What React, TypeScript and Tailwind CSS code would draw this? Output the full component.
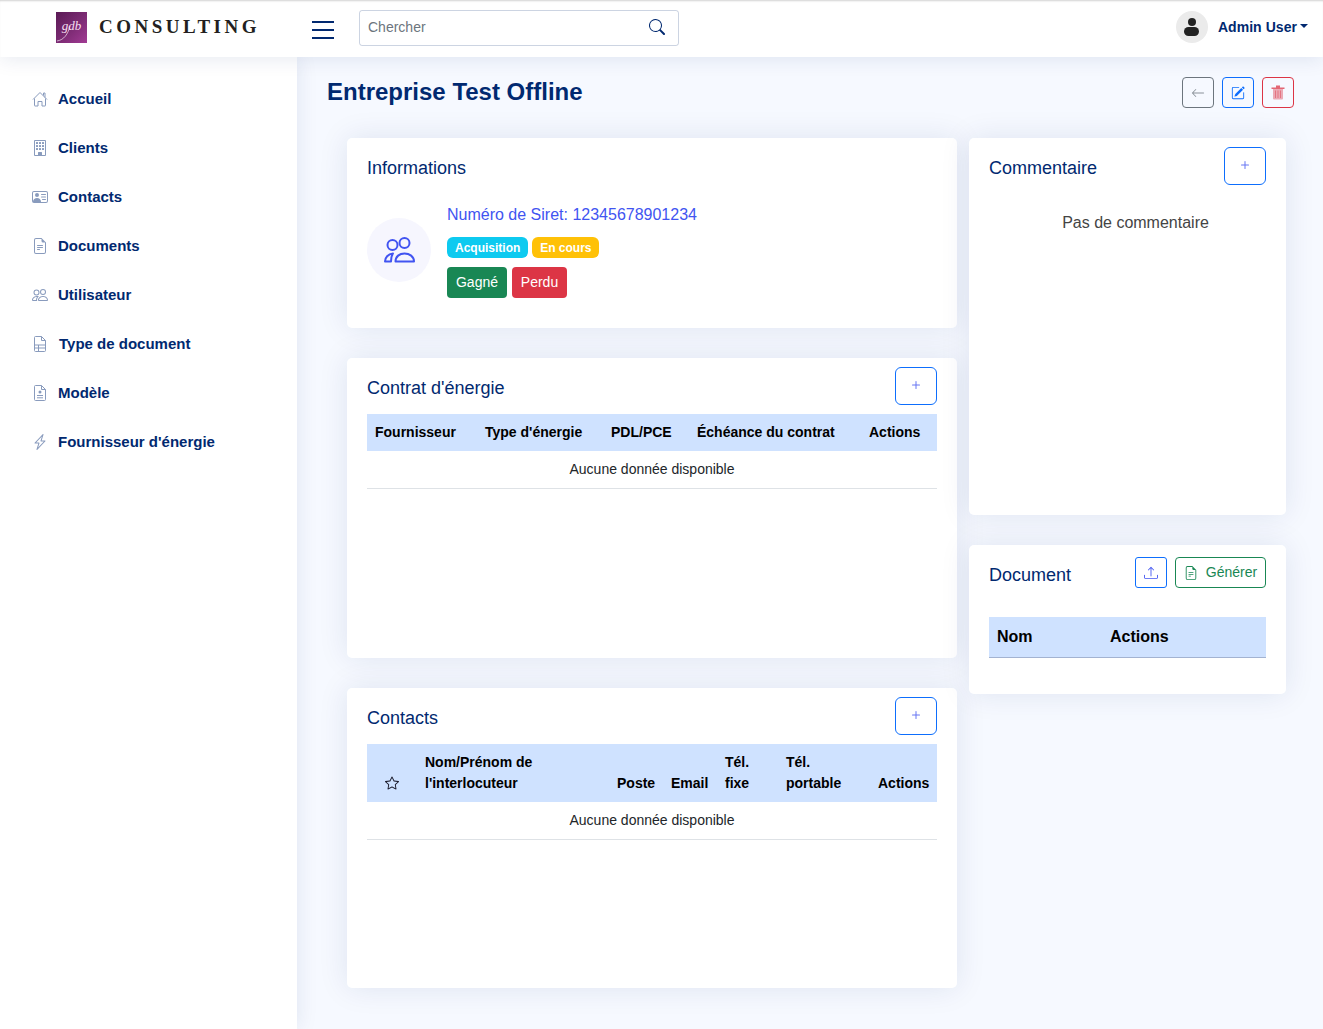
import React from "react";
import {
  BsBuilding, BsPersonVcard, BsFileEarmarkText, BsPeople,
  BsLightningCharge, BsSearch, BsArrowLeft, BsPencilSquare,
  BsUpload, BsStar, BsPlus,
} from "react-icons/bs";

function HomeIcon({ size, className }: { size: number; className?: string }) {
  return (
    <svg width={size} height={size} viewBox="0 0 16 16" fill="none" stroke="currentColor" strokeWidth="1" className={className}>
      <path d="M1 8.500 8 1.500l7 7" strokeLinejoin="round" />
      <path d="M11.500 4.500V2h1.500v4.500" />
      <path d="M2.500 7.500v7a.5.5 0 0 0 .5.5h3v-4.500h4V15h3a.5.5 0 0 0 .5-.5v-7" strokeLinejoin="round" />
    </svg>
  );
}

function TableDocIcon({ size, className }: { size: number; className?: string }) {
  return (
    <svg width={size} height={size} viewBox="0 0 16 16" fill="none" stroke="currentColor" strokeWidth="1" className={className}>
      <path d="M3.500.5h6l4 4v10a1 1 0 0 1-1 1h-9a1 1 0 0 1-1-1v-13a1 1 0 0 1 1-1z" strokeLinejoin="round" />
      <path d="M9.500.5v4h4M2.500 9h11M2.500 12h11M6.500 9v6.500" />
    </svg>
  );
}

function ModelIcon({ size, className }: { size: number; className?: string }) {
  return (
    <svg width={size} height={size} viewBox="0 0 16 16" fill="none" stroke="currentColor" strokeWidth="1" className={className}>
      <path d="M3.500.5h6l4 4v10a1 1 0 0 1-1 1h-9a1 1 0 0 1-1-1v-13a1 1 0 0 1 1-1z" strokeLinejoin="round" />
      <path d="M9.500.5v4h4M5 10.500h6M5 12.800h6" />
      <circle cx="8" cy="7" r="1.500" fill="currentColor" stroke="none" />
    </svg>
  );
}

const nav: [React.ElementType, string, string][] = [
  [HomeIcon, "Accueil", "ml-[10px]"],
  [BsBuilding, "Clients", "ml-[10px]"],
  [BsPersonVcard, "Contacts", "ml-[10px]"],
  [BsFileEarmarkText, "Documents", "ml-[10px]"],
  [BsPeople, "Utilisateur", "ml-[10px]"],
  [TableDocIcon, "Type de document", "ml-[11px]"],
  [ModelIcon, "Modèle", "ml-[10px]"],
  [BsLightningCharge, "Fournisseur d'énergie", "ml-[10px]"],
];

function PlusButton() {
  return (
    <button className="w-[42px] h-[38px] mt-[9px] flex items-center justify-center rounded-[6px] border border-[#0d6efd] text-[#4154f1] bg-white">
      <BsPlus size={16} className="opacity-80 -mt-[2px]" />
    </button>
  );
}

function Card({ className, children }: { className: string; children: React.ReactNode }) {
  return (
    <section className={`bg-white rounded-[5px] px-5 shadow-[0_0_30px_rgba(1,41,112,0.1)] ${className}`}>
      {children}
    </section>
  );
}

function Title({ children }: { children: React.ReactNode }) {
  return <h2 className="text-[18px] leading-[22px] pt-[19px] text-[#012970]">{children}</h2>;
}

function Empty({ span }: { span: number }) {
  return (
    <tr>
      <td colSpan={span} className="h-[37px] text-center text-[14px] text-[#212529] border-b border-[#dee2e6]">
        Aucune donnée disponible
      </td>
    </tr>
  );
}

function PeopleDuo() {
  return (
    <svg width="32" height="26" viewBox="0 0 32 26" fill="none" stroke="#4154f1" strokeWidth="2" className="ml-[1px]">
      <circle cx="8.500" cy="8" r="5" />
      <circle cx="20.500" cy="6" r="5" />
      <path d="M1 24.500c0-4 3-7.500 8-8-1.500 2-2 5-2 8H1z" strokeLinejoin="round" />
      <path d="M11.500 24.500c0-5 4-8 9-8s9.500 3 9.500 8H11.500z" strokeLinejoin="round" />
    </svg>
  );
}

function Trash() {
  return (
    <svg width="14" height="15" viewBox="0 0 14 15">
      <path d="M0.500 2.500h13v1.500h-13zM5 0.500h4v2h-4z" fill="#dc3545" opacity="0.75" />
      <path d="M2 4h10v9.500a1 1 0 0 1-1 1H3a1 1 0 0 1-1-1z" fill="#dc3545" opacity="0.4" />
      <path d="M4.500 5.500v7.500M7 5.500v7.500M9.500 5.500v7.500" stroke="#dc3545" strokeWidth="1" opacity="0.45" />
    </svg>
  );
}

export default function App() {
  return (
    <div className="h-[1029px] w-full overflow-hidden flex flex-col bg-[#f6f9ff] font-['Liberation_Sans',Arial,sans-serif]">
      <header className="relative z-20 h-[57px] shrink-0 flex items-center pb-[1px] bg-white shadow-[inset_0_2px_2px_-1px_rgba(0,0,0,0.18),0_2px_20px_rgba(1,41,112,0.1)]">
        <div className="w-[312px] shrink-0 flex items-center pl-[56px]">
          <div className="relative w-[31px] h-[31px] -mt-[2px] overflow-hidden bg-gradient-to-br from-[#5a1a55] via-[#7a2a72] to-[#a23b94] flex items-center justify-center">
            <span className="text-[13px] italic text-[#f5dff0] font-['Liberation_Serif',serif] leading-none -mt-[3px]">gdb</span>
            <svg className="absolute inset-0" width="31" height="31" viewBox="0 0 31 31" fill="none">
              <path d="M1 29C8 28 12 22 14 14" stroke="#f5e5f2" strokeWidth="0.7" />
            </svg>
          </div>
          <span className="ml-[12px] text-[19px] font-bold tracking-[3.500px] text-[#231f20] font-['Liberation_Serif',serif] leading-none -mt-[3px]">
            CONSULTING
          </span>
        </div>
        <div className="w-[22px] h-[18px] mt-[4px] flex flex-col justify-between">
          <span className="block h-[2px] bg-[#012970]" />
          <span className="block h-[2px] bg-[#012970]" />
          <span className="block h-[2px] bg-[#012970]" />
        </div>
        <div className="ml-[25px] w-[320px] h-[36px] flex items-center justify-between pl-[8px] pr-[13px] rounded-[3px] border border-[rgba(1,41,112,0.2)]">
          <span className="text-[14px] text-[#6c757d] -mt-[2px]">Chercher</span>
          <BsSearch size={16} className="text-[#012970] -mt-[3px]" />
        </div>
        <div className="ml-auto mr-[15px] mb-[2px] flex items-center">
          <div className="w-[32px] h-[32px] rounded-full bg-[#ebebeb] flex flex-col items-center justify-center">
            <span className="block w-[8px] h-[8px] rounded-full bg-[#222]" />
            <span className="block w-[15px] h-[9px] rounded-full bg-[#222] mt-[1px]" />
          </div>
          <span className="ml-[10px] text-[14px] tracking-[0.05px] font-bold text-[#012970]">Admin User</span>
          <span className="ml-[3px] mb-[2px] w-0 h-0 border-x-[4px] border-x-transparent border-t-[4px] border-t-[#012970]" />
        </div>
      </header>

      <div className="flex flex-1 min-h-0">
        <aside className="relative z-10 w-[297px] shrink-0 bg-white pt-[18px] pl-[32px] shadow-[0_0_20px_rgba(1,41,112,0.1)]">
          <nav className="flex flex-col">
            {nav.map(([Icon, label, gap]) => (
              <a key={label} className="h-[49px] flex items-center text-[#012970]">
                <Icon size={16} className="text-[#899bbd] -mt-[2px]" />
                <span className={`${gap} text-[15px] font-bold`}>{label}</span>
              </a>
            ))}
          </nav>
        </aside>

        <main className="flex-1 min-w-0 pl-[30px] pr-[29px] pt-[20px]">
          <div className="flex items-center justify-between h-[31px]">
            <h1 className="text-[24px] font-bold text-[#012970] -mt-[2px]">Entreprise Test Offline</h1>
            <div className="flex gap-[8px]">
              <button className="w-[32px] h-[31px] flex items-center justify-center rounded-[4px] border border-[#6c757d] text-[#8a929a]">
                <BsArrowLeft size={14} />
              </button>
              <button className="w-[32px] h-[31px] flex items-center justify-center rounded-[4px] border border-[#0d6efd] text-[#0d6efd]">
                <BsPencilSquare size={14} />
              </button>
              <button className="w-[32px] h-[31px] flex items-center justify-center rounded-[4px] border border-[#dc3545]">
                <Trash />
              </button>
            </div>
          </div>

          <div className="mt-[30px] ml-[20px] grid grid-cols-[610px_317px] gap-x-[12px] items-start">
            <div className="flex flex-col gap-[30px]">
              <Card className="h-[190px]">
                <Title>Informations</Title>
                <div className="flex items-center mt-[25px]">
                  <div className="w-[64px] h-[64px] -mt-[2px] rounded-full bg-[#f6f6fe] flex items-center justify-center">
                    <PeopleDuo />
                  </div>
                  <div className="ml-[16px]">
                    <p className="text-[16px] leading-[20px] pt-[1px] text-[#4154f1]">Numéro de Siret: 12345678901234</p>
                    <div className="flex gap-[4px] mt-[12px]">
                      <span className="h-[21px] px-[8px] flex items-center rounded-[6px] bg-[#0dcaf0] text-white text-[12px] font-bold">Acquisition</span>
                      <span className="h-[21px] w-[67px] justify-center flex items-center rounded-[6px] bg-[#ffc107] text-white text-[12px] font-bold">En cours</span>
                    </div>
                    <div className="flex gap-[5px] mt-[9px]">
                      <button className="w-[60px] h-[31px] rounded-[4px] bg-[#198754] text-white text-[14px]">Gagné</button>
                      <button className="w-[55px] h-[31px] rounded-[4px] bg-[#dc3545] text-white text-[14px]">Perdu</button>
                    </div>
                  </div>
                </div>
              </Card>

              <Card className="h-[300px]">
                <div className="flex justify-between items-start h-[56px]">
                  <Title>Contrat d'énergie</Title>
                  <PlusButton />
                </div>
                <table className="w-full table-fixed border-collapse text-left text-[14px] text-[#212529]">
                  <colgroup>
                    <col className="w-[110px]" /><col className="w-[126px]" /><col className="w-[86px]" /><col className="w-[172px]" /><col className="w-[76px]" />
                  </colgroup>
                  <thead>
                    <tr className="bg-[#cfe2ff] text-black">
                      {["Fournisseur", "Type d'énergie", "PDL/PCE", "Échéance du contrat", "Actions"].map((h) => (
                        <th key={h} className="h-[37px] px-[8px] font-bold whitespace-nowrap">{h}</th>
                      ))}
                    </tr>
                  </thead>
                  <tbody><Empty span={5} /></tbody>
                </table>
              </Card>

              <Card className="h-[300px]">
                <div className="flex justify-between items-start h-[56px]">
                  <Title>Contacts</Title>
                  <PlusButton />
                </div>
                <table className="w-full table-fixed border-collapse text-left text-[14px] text-[#212529]">
                  <colgroup>
                    <col className="w-[50px]" /><col className="w-[192px]" /><col className="w-[54px]" /><col className="w-[54px]" /><col className="w-[61px]" /><col className="w-[92px]" /><col className="w-[67px]" />
                  </colgroup>
                  <thead>
                    <tr className="bg-[#cfe2ff] text-black align-bottom leading-[21px]">
                      <th className="py-[8px] px-[8px] text-center">
                        <BsStar size={14} className="inline-block mb-[3px] text-[#1a1a2a]" />
                      </th>
                      <th className="py-[8px] px-[8px] font-bold">Nom/Prénom de<br />l'interlocuteur</th>
                      <th className="py-[8px] px-[8px] font-bold">Poste</th>
                      <th className="py-[8px] px-[8px] font-bold">Email</th>
                      <th className="py-[8px] px-[8px] font-bold">Tél.<br />fixe</th>
                      <th className="py-[8px] px-[8px] font-bold">Tél.<br />portable</th>
                      <th className="py-[8px] px-[8px] font-bold">Actions</th>
                    </tr>
                  </thead>
                  <tbody><Empty span={7} /></tbody>
                </table>
              </Card>
            </div>

            <div className="flex flex-col gap-[30px]">
              <Card className="h-[377px]">
                <div className="flex justify-between items-start h-[56px]">
                  <Title>Commentaire</Title>
                  <PlusButton />
                </div>
                <p className="mt-[19px] pl-[16px] text-center text-[16px] leading-[20px] text-[#444444]">Pas de commentaire</p>
              </Card>

              <Card className="h-[149px]">
                <div className="flex justify-between items-start h-[72px]">
                  <h2 className="text-[18px] leading-[22px] pt-[19px] text-[#012970]">Document</h2>
                  <div className="flex gap-[8px] mt-[12px]">
                    <button className="w-[32px] h-[31px] flex items-center justify-center rounded-[3px] border border-[#0d6efd] text-[#4154f1]">
                      <BsUpload size={14} />
                    </button>
                    <button className="w-[91px] h-[31px] flex items-center justify-center gap-[8px] rounded-[4px] border border-[#198754] text-[#198754] text-[14px]">
                      <BsFileEarmarkText size={14} />
                      Générer
                    </button>
                  </div>
                </div>
                <table className="w-full table-fixed border-collapse text-left text-[16px] text-black">
                  <colgroup><col className="w-[113px]" /><col /></colgroup>
                  <thead>
                    <tr className="bg-[#cfe2ff] border-b border-[#a3b3d1]">
                      <th className="h-[40px] px-[8px] font-bold">Nom</th>
                      <th className="h-[40px] px-[8px] font-bold">Actions</th>
                    </tr>
                  </thead>
                </table>
              </Card>
            </div>
          </div>
        </main>
      </div>
    </div>
  );
}
